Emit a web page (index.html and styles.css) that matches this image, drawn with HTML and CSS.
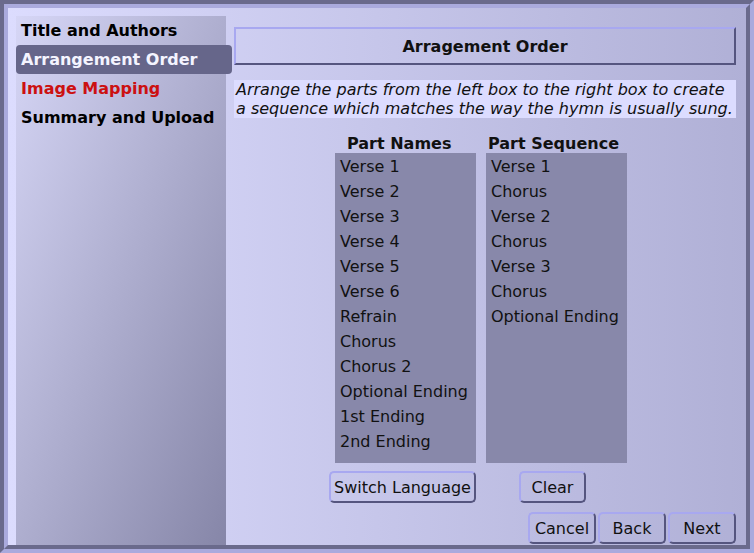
FILE: index.html
```html
<!DOCTYPE html>
<html>
<head>
<meta charset="utf-8">
<link rel="stylesheet" href="styles.css">
</head>
<body>
<div class="frame">
  <div class="inner">
    <nav class="sidebar">
      <div class="nav-item">Title and Authors</div>
      <div class="nav-item active">Arrangement Order</div>
      <div class="nav-item error">Image Mapping</div>
      <div class="nav-item">Summary and Upload</div>
    </nav>
    <main class="main">
      <div class="title-box">Arragement Order</div>
      <p class="instructions">Arrange the parts from the left box to the right box to create a sequence which matches the way the hymn is usually sung.</p>
      <div class="lists">
        <div class="col">
          <div class="col-head head-names">Part Names</div>
          <ul class="list">
            <li>Verse 1</li>
            <li>Verse 2</li>
            <li>Verse 3</li>
            <li>Verse 4</li>
            <li>Verse 5</li>
            <li>Verse 6</li>
            <li>Refrain</li>
            <li>Chorus</li>
            <li>Chorus 2</li>
            <li>Optional Ending</li>
            <li>1st Ending</li>
            <li>2nd Ending</li>
          </ul>
        </div>
        <div class="col">
          <div class="col-head head-seq">Part Sequence</div>
          <ul class="list">
            <li>Verse 1</li>
            <li>Chorus</li>
            <li>Verse 2</li>
            <li>Chorus</li>
            <li>Verse 3</li>
            <li>Chorus</li>
            <li>Optional Ending</li>
          </ul>
        </div>
      </div>
      <div class="list-actions">
        <button class="btn">Switch Language</button>
        <button class="btn btn-clear">Clear</button>
      </div>
      <div class="wizard-actions">
        <button class="btn">Cancel</button>
        <button class="btn">Back</button>
        <button class="btn">Next</button>
      </div>
    </main>
  </div>
</div>
</body>
</html>
```
FILE: styles.css
```css
* { box-sizing: border-box; }
html, body {
  margin: 0;
  padding: 0;
  background: #aaaadd;
}
body {
  font-family: "DejaVu Sans", Verdana, sans-serif;
  font-size: 16px;
  color: #111;
}
.frame {
  width: 754px;
  height: 553px;
  border: 4px solid;
  border-color: #6a6a8c #aaaadd #aaaadd #6a6a8c;
}
.inner {
  height: 100%;
  border: 4px solid;
  border-color: #aaaadd #6a6a8c #6a6a8c #aaaadd;
  background: linear-gradient(to right, #dcdcfe, #b0b0d6);
  display: flex;
}
.sidebar {
  width: 210px;
  flex: none;
  margin: 8px 0 0 8px;
  background: linear-gradient(to bottom right, #d6d6f6, #8686a8);
}
.nav-item {
  height: 29px;
  line-height: 29px;
  padding-left: 5px;
  font-weight: bold;
  color: #000;
  white-space: nowrap;
}
.nav-item.active {
  width: 216px;
  background: #66668a;
  color: #f4f4ff;
  border-radius: 4px;
}
.nav-item.error { color: #cc1111; }
.main {
  flex: 1;
  display: flex;
  flex-direction: column;
  padding: 19px 10px 0 8px;
}
.title-box {
  height: 38px;
  border: 2px solid;
  border-color: #a8a8f0 #55557f #55557f #a8a8f0;
  font-weight: bold;
  text-align: center;
  line-height: 36px;
}
.instructions {
  margin: 15px 0 0;
  padding: 0 2px;
  background: #dcdcff;
  font-style: italic;
  line-height: 19px;
  color: #111;
}
.lists {
  display: flex;
  gap: 10px;
  margin-top: 16px;
  padding-left: 101px;
}
.col { width: 141px; }
.col-head {
  height: 19px;
  line-height: 19px;
  font-weight: bold;
  white-space: nowrap;
}
.head-names { padding-left: 12px; }
.head-seq { padding-left: 2px; }
.list {
  list-style: none;
  margin: 0;
  padding: 1px 0 9px 5px;
  height: 310px;
  background: #8888aa;
}
.list li {
  height: 25px;
  line-height: 25px;
  white-space: nowrap;
}
.list-actions {
  display: flex;
  gap: 43px;
  margin-top: 8px;
  padding-left: 95px;
}
.wizard-actions {
  display: flex;
  justify-content: flex-end;
  gap: 2px;
  margin-top: 9px;
}
.btn {
  font-family: inherit;
  font-size: 16px;
  color: #111;
  height: 32px;
  min-width: 68px;
  padding: 0 3px;
  background: transparent;
  border: 2px solid;
  border-color: #a8a8f0 #55557f #55557f #a8a8f0;
  border-radius: 5px;
}
.btn-clear { min-width: 67px; }
```
